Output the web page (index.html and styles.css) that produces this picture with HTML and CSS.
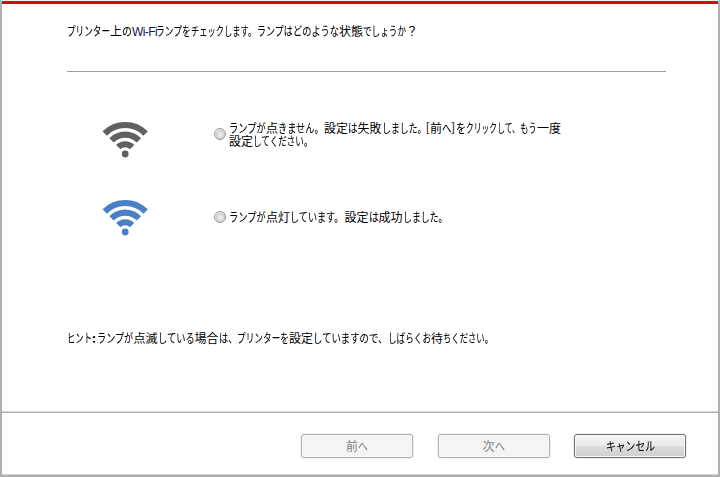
FILE: index.html
```
<!DOCTYPE html>
<html lang="ja">
<head>
<meta charset="utf-8">
<title>Wi-Fi</title>
<link rel="stylesheet" href="styles.css">
</head>
<body>
<div class="window">
  <main class="content">
    <p class="line question"><span class="kana" style="--n:5;--w:43">プリンター</span>上<span class="kana" style="--n:1;--w:10">の</span><span class="latin">Wi-Fi</span><span class="kana" style="--n:4;--w:35">ランプを</span><span class="kana" style="--n:8;--w:66">チェックします。</span><span class="kana" style="--n:4;--w:36">ランプは</span><span class="kana" style="--n:5;--w:46">どのような</span>状態<span class="kana" style="--n:5;--w:43">でしょうか</span>？</p>
    <div class="options">
      <label class="option first">
        <svg class="wifi off" viewBox="0 0 46 38"><path d="M1.7 12.5A29 29 0 0 1 42.7 12.5M8.5 19.4A19.3 19.3 0 0 1 35.9 19.4M15.3 26.1A9.8 9.8 0 0 1 29.1 26.1"/><circle cx="22.2" cy="33" r="3.4"/></svg>
        <input class="radio" type="radio" name="lamp">
        <span class="text">
          <span class="line"><span class="kana" style="--n:4;--w:37">ランプが</span>点<span class="kana" style="--n:5;--w:46">きません。</span>設定<span class="kana" style="--n:1;--w:9.5">は</span>失敗<span class="kana" style="--n:5;--w:44.5">しました。</span><span class="bracket">[</span>前<span class="kana" style="--n:1;--w:9.5">へ</span><span class="bracket">]</span><span class="kana" style="--n:1;--w:10">を</span><span class="kana" style="--n:7;--w:54.5">クリックして、</span><span class="kana" style="--n:2;--w:17">もう</span>一度</span>
          <span class="line">設定<span class="kana" style="--n:7;--w:60">してください。</span></span>
        </span>
      </label>
      <label class="option">
        <svg class="wifi on" viewBox="0 0 46 38"><path d="M1.7 12.5A29 29 0 0 1 42.7 12.5M8.5 19.4A19.3 19.3 0 0 1 35.9 19.4M15.3 26.1A9.8 9.8 0 0 1 29.1 26.1"/><circle cx="22.2" cy="33" r="3.4"/></svg>
        <input class="radio" type="radio" name="lamp">
        <span class="text">
          <span class="line"><span class="kana" style="--n:4;--w:37">ランプが</span>点灯<span class="kana" style="--n:6;--w:54.5">しています。</span>設定<span class="kana" style="--n:1;--w:10">は</span>成功<span class="kana" style="--n:5;--w:44.5">しました。</span></span>
        </span>
      </label>
    </div>
    <p class="line hint"><span class="kana" style="--n:3;--w:25">ヒント</span><b class="colon">:</b><span class="kana" style="--n:4;--w:36.5">ランプが</span>点滅<span class="kana" style="--n:4;--w:37">している</span>場合<span class="kana" style="--n:2;--w:18.5">は、</span><span class="kana" style="--n:6;--w:52">プリンターを</span>設定<span class="kana" style="--n:8;--w:75">していますので、</span><span class="kana" style="--n:5;--w:43">しばらくお</span>待<span class="kana" style="--n:6;--w:50">ちください。</span></p>
  </main>
  <footer class="footer">
    <button class="button" disabled><span class="line">前<span class="kana" style="--n:1;--w:10">へ</span></span></button>
    <button class="button" disabled><span class="line">次<span class="kana" style="--n:1;--w:10">へ</span></span></button>
    <button class="button"><span class="line"><span class="kana" style="--n:5;--w:49">キャンセル</span></span></button>
  </footer>
</div>
</body>
</html>
```
FILE: styles.css
```
* { box-sizing: border-box; }
body {
  margin: 0;
  font: 12px/13px "Noto Sans CJK JP", sans-serif;
  color: #000;
}
.window {
  width: 720px;
  height: 477px;
  display: flex;
  flex-direction: column;
  background: #fff;
  border: 2px solid #b0b0b0;
  border-top: 1px solid #e8f0f0;
}
.content {
  height: 411px;
  border-top: 3px solid #e60012;
  padding: 20px 52px 0 65px;
}
p { margin: 0; }
.line {
  display: flex;
  height: 13px;
  white-space: nowrap;
}
/* Condensed kana: --n characters drawn --w pixels wide */
.kana {
  flex: none;
  width: calc(var(--n) * 12px);
  height: 13px;
  margin-right: calc(var(--w) * 1px - var(--n) * 12px);
  transform: scale(calc(var(--w) / (var(--n) * 12)), 1.04);
  transform-origin: 0 50%;
  -webkit-text-stroke: 0.06px currentColor;
}
.latin {
  flex: none;
  width: 24px;
  padding-top: 2px;
  font-family: "Liberation Sans", sans-serif;
  letter-spacing: -0.6px;
  color: #161650;
}
.bracket {
  width: 4px;
  font-family: "Liberation Sans", sans-serif;
  color: #303050;
}
.colon { width: 5px; }
.question {
  height: 48px;
  border-bottom: 1px solid #a0a0a0;
}
.options {
  height: 259px;
  padding-top: 49px;
}
.option {
  display: flex;
  align-items: center;
  height: 38px;
  margin: 0 0 40px 36px;
}
.wifi {
  width: 46px;
  height: 38px;
  fill: none;
  stroke-width: 6.2;
  overflow: visible;
  filter: blur(0.5px);
}
.off { stroke: #606060; }
.on { stroke: #4a80c4; }
.off circle { fill: #606060; stroke: none; }
.on circle { fill: #4a80c4; stroke: none; }
.radio {
  appearance: none;
  width: 12px;
  height: 12px;
  flex: none;
  margin: 0 3px 2px 65px;
  border: 1px solid #969898;
  border-radius: 50%;
  background: radial-gradient(circle at 55% 55%, #e8e8e8 0 25%, #c8ccd0 50%, #f4f4f4 72%);
}
.text { margin-bottom: 3px; }
.first .radio, .first .text { margin-bottom: 12px; }
.footer {
  flex: 1;
  display: flex;
  gap: 24.5px;
  border-top: 1px solid #b0b0b0;
  box-shadow: 0 -1px #d8d8d8, inset 0 -1px #d0d0d0;
  padding: 21px 0 0 299px;
}
.button {
  display: flex;
  align-items: center;
  justify-content: center;
  width: 112px;
  height: 24px;
  padding: 0 0 2px;
  font: inherit;
  color: #000;
  border: 1px solid #707070;
  border-radius: 3px;
  background: linear-gradient(#f2f2f2 0 10%, #ebebeb 48%, #dddddd 50%, #cfcfcf);
  box-shadow: inset 0 0 0 1px #fafafa, 0 0 0 1px #f0f0f0;
}
.button:disabled {
  color: #838383;
  border-color: #adb2b5;
  background: #f4f4f4;
}
```
